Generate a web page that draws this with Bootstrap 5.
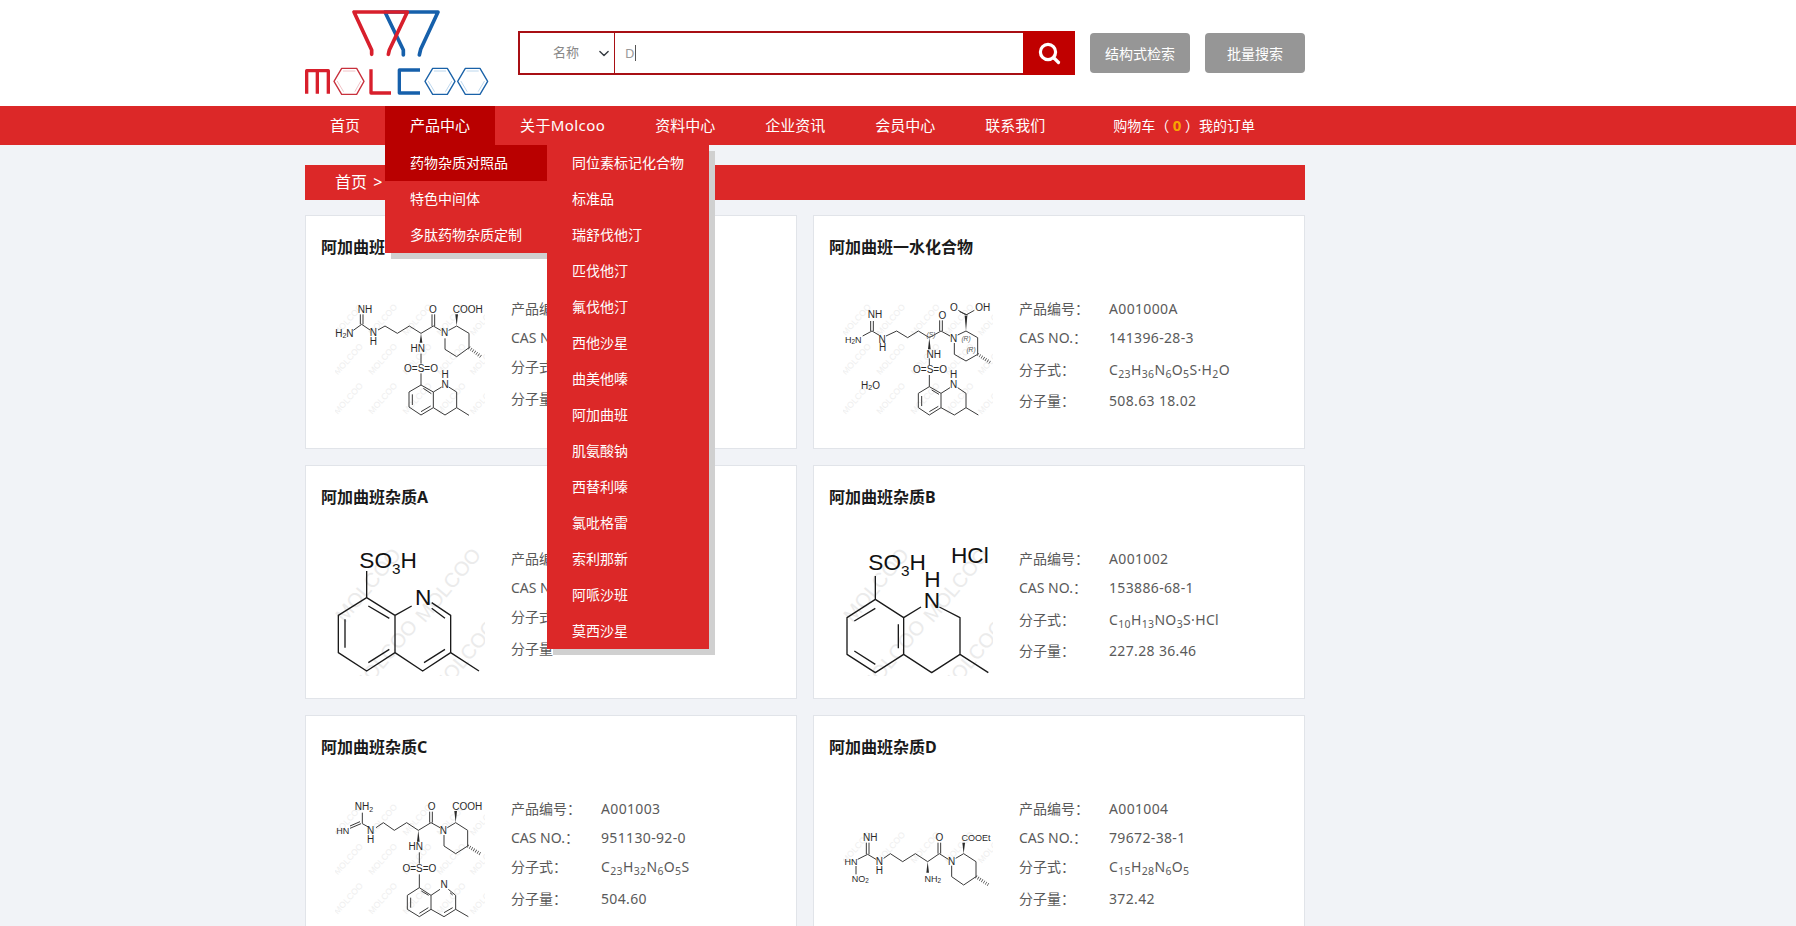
<!DOCTYPE html>
<html lang="zh-CN">
<head>
<meta charset="utf-8">
<title>Molcoo</title>
<link href="https://cdn.jsdelivr.net/npm/bootstrap@5.3.0/dist/css/bootstrap.min.css" rel="stylesheet">
<style>
html,body{height:926px;overflow:hidden}
body{background:#f1f3f7;font-family:"Noto Sans","Noto Sans CJK SC",sans-serif;color:#555;font-size:14px}
.site-top{background:#fff;height:106px}
.wrap-main{width:1000px;margin-left:305px}
.logo-box{width:213px;height:106px;flex:none}
.logo-box svg{display:block;width:190px;height:100px}
.search-box{width:557px;height:44px;margin-top:31px;border:2px solid #a80f14;background:#fff;flex:none}
.search-box .form-select{width:95px;flex:none;height:40px;border:0;border-right:1px solid #a80f14;border-radius:0;padding:0 24px 0 33px;font-size:13px;color:#888;background-position:right 3px center;background-size:14px 11px;box-shadow:none}
.input-wrap{position:relative;flex:1 1 auto}
.search-box .form-control{height:40px;border:0;border-radius:0;padding:0 10px;font-size:13px;color:#999;box-shadow:none}
.fake-caret{position:absolute;left:20px;top:12px;width:1px;height:16px;background:#555}
.search-go{width:52px;height:44px;margin:-2px -2px -2px 0;background:#c00000;border:0;border-radius:0;padding:0;flex:none}
.grey-btn{width:100px;height:40px;margin:33px 0 0 15px;background:#969696;border:0;border-radius:4px;color:#fff;font-size:14px;padding:0;flex:none}
.grey-btn:hover{background:#969696;color:#fff}
.red-nav{background:#dc2828;height:39px}
.red-nav .nav-link{color:#fff;font-size:15px;line-height:39px;padding:0 25px;height:39px}
.red-nav .nav-link.latin-wide{letter-spacing:.4px}
.red-nav .nav-item{position:relative}
.red-nav .nav-item.on>.nav-link{background:#b90000}
.cart-line{margin-left:43px;color:#fff;font-size:14px;line-height:39px;white-space:nowrap}
.cart-line b{color:#f7a600;font-size:15px}
.drop-a,.drop-b{position:absolute;top:39px;width:162px;background:#dc2828;box-shadow:6px 6px 0 #d0d0d0;z-index:5;margin:0;padding:0;list-style:none}
.drop-a{left:0}
.drop-b{left:162px}
.drop-a a,.drop-b a{display:block;height:36px;line-height:35px;padding-left:25px;color:#fff;font-size:14px;text-decoration:none;white-space:nowrap}
.drop-a li.on a{background:#b90000}
.crumb-bar{background:#dc2828;height:35px;margin-top:20px;padding-left:30px;line-height:35px;font-size:16px;color:#fff;word-spacing:2px}
.item-grid{display:grid;grid-template-columns:492px 492px;gap:16px;margin-top:15px}
.item-card{height:234px;border:1px solid #e1e4e9;border-radius:0;background:#fff;flex:none}
.item-name{font-size:16px;font-weight:700;color:#1a1a1a;line-height:24px;margin:0;padding:19px 0 0 15px}
.item-pic{display:block;width:150px;height:150px;margin:17px 0 0 29px;flex:none}
.item-facts{margin:34.5px 0 0 26px;padding:0;list-style:none}
.item-facts li{display:flex;height:29px;line-height:29px;color:#5a5a5a;letter-spacing:.35px}
.item-facts li span:first-child{width:90px;flex:none;letter-spacing:0}
.item-facts li.fm-a{height:32px}
.item-facts li.fm-b{height:34px;padding-top:3px}
.item-facts sub{line-height:0;font-size:.75em;bottom:-.3em}
.mol{font-family:"Liberation Sans",sans-serif;font-size:30px;fill:#2a2a2a}
.mol text{text-anchor:middle}
.mol .ln{fill:none;stroke:#3a3a3a;stroke-width:3;stroke-linejoin:round}
.mol .hs{fill:none;stroke:#3a3a3a;stroke-width:10;stroke-dasharray:2 5}
.mol .wm{font-size:26px;fill:#efefef}
.mol .wb{font-size:60px;fill:#ebebeb}
.mol.big{font-size:68px;fill:#111}
.mol.big .lab{text-anchor:start}
.mol.big .ln{stroke:#1a1a1a;stroke-width:4}
.mol .tiny{font-size:20px;font-style:italic;fill:#555}
</style>
</head>
<body>
<header class="site-top">
  <div class="wrap-main d-flex">
    <a class="logo-box d-block" href="#" aria-label="Molcoo">
      <svg viewBox="45 0 570 300" fill="none" stroke-linecap="round" stroke-linejoin="round">
        <path d="M340 165V150L285 36H444L392 148 388 165" stroke="#1660ab" stroke-width="11"/>
        <path d="M245 163V150L192 36H352L298 150 295 163" stroke="#d81f2c" stroke-width="11"/>
        <path d="M50 281V212H115V281M82 212V281" stroke="#d81f2c" stroke-width="10" stroke-linecap="butt"/>
        <path d="M132 244 155 205H200L222 244 200 283H155Z" stroke="#c8303c" stroke-width="4"/>
        <path d="M160 213H195M142 244 160 274M212 244 195 274" stroke="#eaa5aa" stroke-width="2"/>
        <path d="M243 208V279H303" stroke="#d81f2c" stroke-width="10" stroke-linecap="butt"/>
        <path d="M390 210H328V279H390" stroke="#1660ab" stroke-width="10" stroke-linecap="butt"/>
        <path d="M405 244 428 205H472L495 244 472 283H428Z" stroke="#1a62a8" stroke-width="4"/>
        <path d="M433 213H467M415 244 433 274M485 244 467 274" stroke="#9cc3e4" stroke-width="2"/>
        <path d="M503 244 526 205H570L593 244 570 283H526Z" stroke="#1a62a8" stroke-width="4"/>
        <path d="M531 213H565M513 244 531 274M583 244 565 274" stroke="#9cc3e4" stroke-width="2"/>
      </svg>
    </a>
    <form class="search-box d-flex" onsubmit="return false">
      <select class="form-select" aria-label="类型"><option>名称</option></select>
      <div class="input-wrap">
        <input class="form-control" type="text" value="D" aria-label="搜索">
        <span class="fake-caret"></span>
      </div>
      <button class="search-go btn d-flex align-items-center justify-content-center" type="submit" aria-label="搜索">
        <svg width="24" height="24" viewBox="0 0 24 24" fill="none" stroke="#fff" stroke-width="3.2" stroke-linecap="round"><circle cx="11" cy="11" r="7.6"/><path d="M17 17l4.5 4.5"/></svg>
      </button>
    </form>
    <button class="grey-btn btn" type="button">结构式检索</button>
    <button class="grey-btn btn" type="button">批量搜索</button>
  </div>
</header>
<nav class="red-nav">
  <div class="wrap-main">
    <ul class="nav flex-nowrap align-items-center">
      <li class="nav-item"><a class="nav-link" href="#">首页</a></li>
      <li class="nav-item on"><a class="nav-link" href="#">产品中心</a>
        <ul class="drop-a">
          <li class="on"><a href="#">药物杂质对照品</a></li>
          <li><a href="#">特色中间体</a></li>
          <li><a href="#">多肽药物杂质定制</a></li>
        </ul>
        <ul class="drop-b">
          <li><a href="#">同位素标记化合物</a></li>
          <li><a href="#">标准品</a></li>
          <li><a href="#">瑞舒伐他汀</a></li>
          <li><a href="#">匹伐他汀</a></li>
          <li><a href="#">氟伐他汀</a></li>
          <li><a href="#">西他沙星</a></li>
          <li><a href="#">曲美他嗪</a></li>
          <li><a href="#">阿加曲班</a></li>
          <li><a href="#">肌氨酸钠</a></li>
          <li><a href="#">西替利嗪</a></li>
          <li><a href="#">氯吡格雷</a></li>
          <li><a href="#">索利那新</a></li>
          <li><a href="#">阿哌沙班</a></li>
          <li><a href="#">莫西沙星</a></li>
        </ul>
      </li>
      <li class="nav-item"><a class="nav-link latin-wide" href="#">关于Molcoo</a></li>
      <li class="nav-item"><a class="nav-link" href="#">资料中心</a></li>
      <li class="nav-item"><a class="nav-link" href="#">企业资讯</a></li>
      <li class="nav-item"><a class="nav-link" href="#">会员中心</a></li>
      <li class="nav-item"><a class="nav-link" href="#">联系我们</a></li>
      <li class="cart-line">购物车（ <b>0</b> ）我的订单</li>
    </ul>
  </div>
</nav>
<main class="wrap-main">
  <div class="crumb-bar">首页 &gt;</div>
  <div class="item-grid">

    <article class="item-card card">
      <h2 class="item-name">阿加曲班</h2>
      <div class="d-flex">
        <svg class="item-pic mol" viewBox="135 435 450 450">
          <defs>
            <g id="wmrow">
              <text class="wm" transform="translate(47 0) rotate(-48)">MOLCOO</text>
              <text class="wm" transform="translate(150 0) rotate(-48)">MOLCOO</text>
              <text class="wm" transform="translate(253 0) rotate(-48)">MOLCOO</text>
              <text class="wm" transform="translate(355 0) rotate(-48)">MOLCOO</text>
              <text class="wm" transform="translate(455 0) rotate(-48)">MOLCOO</text>
            </g>
            <g id="wmall">
              <use href="#wmrow" y="137"/><use href="#wmrow" y="255"/><use href="#wmrow" y="373"/>
            </g>
            <g id="wmbig">
              <text class="wb" transform="translate(115 190) rotate(-50)">MOLCOO</text>
              <text class="wb" transform="translate(355 190) rotate(-50)">MOLCOO</text>
              <text class="wb" transform="translate(165 405) rotate(-50)">MOLCOO</text>
              <text class="wb" transform="translate(405 405) rotate(-50)">MOLCOO</text>
            </g>
          </defs>
          <use href="#wmall" x="135" y="435"/>
          <path class="ln" d="M190 598 215 580 240 597M211 550V580M219 550V580M264 597 285 585 322 607 358 585 393 607 430 585 452 598M426 550V585M434 550V585M476 598 500 585 537 607V650L500 677 465 655V622M393 668V698M393 727V762L357 783V828L393 852 430 830V783L393 762M367 790V822M393 842 422 825M400 772 424 788M430 783 455 768M476 768 500 783V830L465 852 430 830M500 830 537 853"/>
          <path class="hs" d="M537 650 573 677"/>
          <polygon points="500,585 496,550 504,550"/><polygon points="393,607 389,635 397,635"/>
          <text x="225" y="547">NH</text><text x="163" y="617">H<tspan font-size="21" dy="5">2</tspan><tspan dy="-5">N</tspan></text>
          <text x="250" y="615">N</text><text x="250" y="642">H</text><text x="429" y="547">O</text><text x="533" y="547">COOH</text><text x="464" y="615">N</text>
          <text x="383" y="663">HN</text><text x="393" y="722">O=S=O</text><text x="465" y="742">H</text><text x="465" y="770">N</text>
        </svg>
        <ul class="item-facts">
          <li><span>产品编号：</span></li>
          <li><span>CAS NO.：</span></li>
          <li class="fm-a"><span>分子式：</span></li>
          <li><span>分子量：</span></li>
        </ul>
      </div>
    </article>

    <article class="item-card card">
      <h2 class="item-name">阿加曲班一水化合物</h2>
      <div class="d-flex">
        <svg class="item-pic mol" viewBox="126 195 450 450">
          <use href="#wmall" x="126" y="195"/>
          <path class="ln" d="M185 375 213 360 235 373M209 330V360M217 330V360M255 375 287 360 320 380 352 360 385 380 420 360 447 375M416 328V360M424 328V360M470 372 495 360 530 380V430L495 450 460 430V396M385 442V462M385 492V527L352 547V590L385 612 420 590V547L385 527M362 555V585M385 602 412 586M392 537 414 550M420 547 447 530M470 530 495 547V590L460 612 420 590M495 590 532 612M495 312 472 298M500 312 476 302M495 312 520 298"/>
          <path class="hs" d="M530 430 568 455"/>
          <polygon points="495,360 491,314 499,314"/><polygon points="385,380 381,415 389,415"/>
          <text x="222" y="322">NH</text><text x="157" y="395" font-size="27">H<tspan font-size="19" dy="5">2</tspan><tspan dy="-5">N</tspan></text>
          <text x="243" y="395">N</text><text x="245" y="420">H</text><text x="424" y="325">O</text><text x="459" y="300">O</text><text x="545" y="300">OH</text><text x="458" y="392">N</text>
          <text x="398" y="440">NH</text><text x="387" y="487">O=S=O</text><text x="458" y="502">H</text><text x="458" y="532">N</text>
          <text x="180" y="533" style="text-anchor:start">H<tspan font-size="21" dy="5">2</tspan><tspan dy="-5">O</tspan></text>
          <text class="tiny" x="390" y="377">(S)</text><text class="tiny" x="495" y="390">(R)</text><text class="tiny" x="510" y="422">(R)</text>
        </svg>
        <ul class="item-facts">
          <li><span>产品编号：</span><span>A001000A</span></li>
          <li><span>CAS NO.：</span><span>141396-28-3</span></li>
          <li class="fm-b"><span>分子式：</span><span>C<sub>23</sub>H<sub>36</sub>N<sub>6</sub>O<sub>5</sub>S·H<sub>2</sub>O</span></li>
          <li><span>分子量：</span><span>508.63 18.02</span></li>
        </ul>
      </div>
    </article>

    <article class="item-card card">
      <h2 class="item-name">阿加曲班杂质A</h2>
      <div class="d-flex">
        <svg class="item-pic mol big" viewBox="105 195 450 450">
          <use href="#wmbig" x="105" y="195"/>
          <path class="ln" d="M200 330V410L115 463V575L200 630 285 575V463L200 410M135 475V560M205 605 268 565M205 435 268 472M285 463 335 435M395 425 452 463V575L368 630 285 575M395 442 435 472M372 605 435 565M452 575 537 630"/>
          <text class="lab" x="178" y="320">SO<tspan font-size="46" dy="18">3</tspan><tspan dy="-18">H</tspan></text>
          <text class="lab" x="345" y="432">N</text>
        </svg>
        <ul class="item-facts">
          <li><span>产品编号：</span></li>
          <li><span>CAS NO.：</span></li>
          <li class="fm-a"><span>分子式：</span></li>
          <li><span>分子量：</span></li>
        </ul>
      </div>
    </article>

    <article class="item-card card">
      <h2 class="item-name">阿加曲班杂质B</h2>
      <div class="d-flex">
        <svg class="item-pic mol big" viewBox="96 195 450 450">
          <use href="#wmbig" x="96" y="195"/>
          <path class="ln" d="M193 345V415L108 470V580L193 635 278 580V470L193 415M130 480 193 442M262 490V562M130 570 193 610M278 470 330 438M385 438 447 470V580L362 635 278 580M447 580 532 635"/>
          <text class="lab" x="172" y="328">SO<tspan font-size="46" dy="18">3</tspan><tspan dy="-18">H</tspan></text>
          <text class="lab" x="420" y="306">HCl</text><text class="lab" x="340" y="378">H</text><text class="lab" x="338" y="440">N</text>
        </svg>
        <ul class="item-facts">
          <li><span>产品编号：</span><span>A001002</span></li>
          <li><span>CAS NO.：</span><span>153886-68-1</span></li>
          <li class="fm-b"><span>分子式：</span><span>C<sub>10</sub>H<sub>13</sub>NO<sub>3</sub>S·HCl</span></li>
          <li><span>分子量：</span><span>227.28 36.46</span></li>
        </ul>
      </div>
    </article>

    <article class="item-card card">
      <h2 class="item-name">阿加曲班杂质C</h2>
      <div class="d-flex">
        <svg class="item-pic mol" viewBox="105 195 450 450">
          <use href="#wmall" x="105" y="195"/>
          <path class="ln" d="M187 305V338M150 352 183 338M150 345 180 332M187 338 205 348M228 350 250 335 283 358 320 335 355 358 393 335 420 350M389 302V335M397 302V335M442 350 467 335 503 358V405L467 428 432 405V372M358 424V458M358 490V530L322 553V595L358 617 393 595V553L358 530M332 560V590M358 607 385 590M364 540 386 553M393 553 420 535M445 535 467 553V595L432 617 393 595M450 545 458 552M432 605 458 590M467 595 505 617"/>
          <path class="hs" d="M503 405 543 430"/>
          <polygon points="467,335 463,300 471,300"/><polygon points="355,358 351,392 359,392"/>
          <text x="192" y="297">NH<tspan font-size="21" dy="5">2</tspan></text><text x="128" y="368" font-size="27">HN</text>
          <text x="212" y="368">N</text><text x="212" y="396">H</text><text x="395" y="297">O</text><text x="502" y="297">COOH</text><text x="430" y="368">N</text>
          <text x="347" y="416">HN</text><text x="358" y="482">O=S=O</text><text x="432" y="530">N</text>
        </svg>
        <ul class="item-facts">
          <li><span>产品编号：</span><span>A001003</span></li>
          <li><span>CAS NO.：</span><span>951130-92-0</span></li>
          <li class="fm-a"><span>分子式：</span><span>C<sub>23</sub>H<sub>32</sub>N<sub>6</sub>O<sub>5</sub>S</span></li>
          <li><span>分子量：</span><span>504.60</span></li>
        </ul>
      </div>
    </article>

    <article class="item-card card">
      <h2 class="item-name">阿加曲班杂质D</h2>
      <div class="d-flex">
        <svg class="item-pic mol" viewBox="96 195 450 450">
          <use href="#wmrow" x="96" y="415"/>
          <path class="ln" d="M166 395V430M174 395V430M140 445 170 430 195 445M218 442 238 428 275 452 313 428 350 452 385 428 412 445M381 395V428M389 395V428M434 442 458 428 495 452V497L458 522 422 497V464M135 465V490"/>
          <path class="hs" d="M495 497 533 522"/>
          <polygon points="458,428 454,395 462,395"/><polygon points="350,452 346,485 354,485"/>
          <text x="178" y="390">NH</text><text x="120" y="462" font-size="27">HN</text><text x="205" y="462">N</text><text x="205" y="488">H</text>
          <text x="148" y="512" font-size="27">NO<tspan font-size="19" dy="5">2</tspan></text><text x="385" y="390">O</text><text x="495" y="390" font-size="27">COOEt</text><text x="422" y="462">N</text>
          <text x="365" y="512" font-size="27">NH<tspan font-size="19" dy="5">2</tspan></text>
        </svg>
        <ul class="item-facts">
          <li><span>产品编号：</span><span>A001004</span></li>
          <li><span>CAS NO.：</span><span>79672-38-1</span></li>
          <li class="fm-a"><span>分子式：</span><span>C<sub>15</sub>H<sub>28</sub>N<sub>6</sub>O<sub>5</sub></span></li>
          <li><span>分子量：</span><span>372.42</span></li>
        </ul>
      </div>
    </article>

  </div>
</main>
<script src="https://cdn.jsdelivr.net/npm/bootstrap@5.3.0/dist/js/bootstrap.bundle.min.js"></script>
</body>
</html>
